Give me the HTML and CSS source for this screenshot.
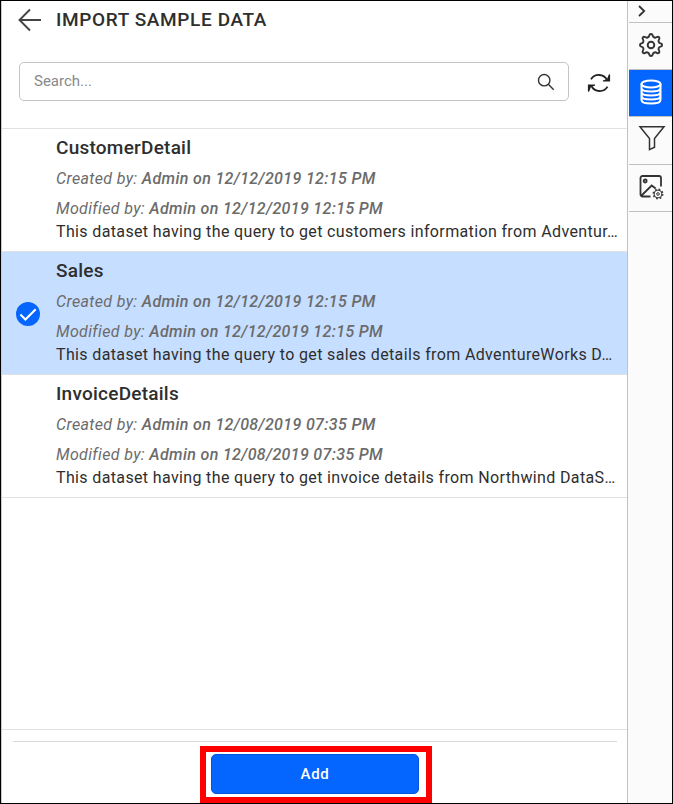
FILE: index.html
```html
<!DOCTYPE html>
<html lang="en">
<head>
<meta charset="utf-8">
<title>Import Sample Data</title>
<link rel="stylesheet" href="styles.css">
</head>
<body>
<div class="app">
  <main class="panel">
    <header class="header">
      <svg class="back" width="24" height="24" viewBox="0 0 24 24"><path d="M12 1.500 1.500 12 12 22.500M1.500 12H23"/></svg>
      <h1>IMPORT SAMPLE DATA</h1>
    </header>
    <div class="tools">
      <div class="search">
        <span>Search...</span>
        <svg width="18" height="18" viewBox="0 0 18 18"><circle cx="7.2" cy="7.2" r="5.7"/><path d="m11.3 11.3 5.4 5.4"/></svg>
      </div>
      <svg class="refresh" width="24" height="22" viewBox="0 0 24 22"><path d="M4 7.400A9 8.700 0 0 1 20 8M20.500 14.600A9 8.700 0 0 1 4.500 14"/><path class="tip" d="M22.500 2.500V9H16L20.500 7.500ZM1.500 19.500V13H8L3.500 14.500Z"/></svg>
    </div>
    <section class="list">
      <article class="item">
        <div class="mark"></div>
        <div class="info">
          <h2>CustomerDetail</h2>
          <p class="meta">Created by: <b>Admin on 12/12/2019 12:15 PM</b></p>
          <p class="meta">Modified by: <b>Admin on 12/12/2019 12:15 PM</b></p>
          <p class="desc">This dataset having the query to get customers information from Adventur…</p>
        </div>
      </article>
      <article class="item selected">
        <div class="mark"><svg width="24" height="24" viewBox="0 0 24 24"><circle cx="12" cy="12" r="12"/><path d="m4.400 12.500 5 5L19.700 7.200"/></svg></div>
        <div class="info">
          <h2>Sales</h2>
          <p class="meta">Created by: <b>Admin on 12/12/2019 12:15 PM</b></p>
          <p class="meta">Modified by: <b>Admin on 12/12/2019 12:15 PM</b></p>
          <p class="desc">This dataset having the query to get sales details from AdventureWorks D…</p>
        </div>
      </article>
      <article class="item">
        <div class="mark"></div>
        <div class="info">
          <h2>InvoiceDetails</h2>
          <p class="meta">Created by: <b>Admin on 12/08/2019 07:35 PM</b></p>
          <p class="meta">Modified by: <b>Admin on 12/08/2019 07:35 PM</b></p>
          <p class="desc">This dataset having the query to get invoice details from Northwind DataS…</p>
        </div>
      </article>
    </section>
    <footer class="footer">
      <div class="highlight"><button class="add">Add</button></div>
    </footer>
  </main>
  <nav class="rail">
    <div class="tab collapse"><svg width="10" height="12" viewBox="0 0 10 12"><path d="m2 1 5.200 5L2 11"/></svg></div>
    <div class="tab"><svg class="gear" width="26" height="26" viewBox="0 0 26 26"><path d="M13 2q1.400 0 1.700 1.500.3 1.500 1.700 2 1.300.5 2.500-.4 1.300-.8 2.100.1.900.8.100 2.100-.9 1.200-.4 2.500.5 1.300 2 1.600 1.400.3 1.400 1.600t-1.400 1.600q-1.500.3-2 1.600-.5 1.300.4 2.500.8 1.300-.1 2.100-.8.900-2.100.100-1.200-.9-2.500-.4-1.400.5-1.700 2Q14.400 24 13 24t-1.700-1.500q-.3-1.500-1.700-2-1.300-.5-2.500.4-1.300.8-2.100-.1-.9-.8-.1-2.100.9-1.200.4-2.500-.5-1.300-2-1.600Q2 14.300 2 13t1.300-1.600q1.500-.3 2-1.600.5-1.300-.4-2.500-.8-1.300.1-2.100.8-.9 2.100-.1 1.200.9 2.500.4 1.400-.5 1.700-2Q11.600 2 13 2z"/><circle cx="13" cy="13" r="3.300"/></svg></div>
    <div class="tab active"><svg width="24" height="26" viewBox="0 0 24 26"><ellipse cx="12" cy="5" rx="9.500" ry="3.500"/><path d="M2.500 5v16c0 4.700 19 4.700 19 0V5M2.500 9c0 4.700 19 4.700 19 0M2.500 13c0 4.700 19 4.700 19 0M2.500 17c0 4.700 19 4.700 19 0"/></svg></div>
    <div class="tab filter"><svg width="28" height="26" viewBox="0 0 28 26"><path d="M2 1.700h24L16.500 13.500v8.800l-5 2.300V13.500z"/></svg></div>
    <div class="tab"><svg class="image" width="26" height="26" viewBox="0 0 26 26"><path d="M12.500 22.500H4.500a2 2 0 0 1-2-2V4a2 2 0 0 1 2-2H21a2 2 0 0 1 2 2v8.500M3 22 13.700 11.500l4 3"/><circle cx="7.200" cy="7" r="1.500"/><g class="small"><circle cx="20" cy="20" r="3.900"/><circle cx="20" cy="20" r="1.300"/><circle class="teeth" cx="20" cy="20" r="4.800"/></g></svg></div>
  </nav>
</div>
</body>
</html>
```

FILE: styles.css
```css
* { box-sizing: border-box; }
body { margin: 0; font-family: Roboto, "Liberation Sans", sans-serif; color: #2e2e2e; }
h1, h2, p { margin: 0; font-weight: 500; }
svg { display: block; fill: none; stroke: #333; stroke-width: 1.5; flex: none; }
.app { display: flex; width: 673px; height: 804px; border: 1px solid #000; background: #fff; overflow: hidden; }
.panel { width: 627px; display: flex; flex-direction: column; border-left: 1px solid #ccc; border-right: 1px solid #c1c1c1; }
.header { display: flex; align-items: center; height: 38px; padding-left: 16px; gap: 14px; }
.back { stroke: #444; stroke-width: 1.9; }
h1 { font-size: 19px; line-height: 36px; letter-spacing: .62px; }
.tools { height: 89px; padding: 23px 0 0 17px; display: flex; align-items: flex-start; }
.search { display: flex; align-items: center; justify-content: space-between; width: 550px; height: 39px; border: 1px solid #c4c4c4; border-radius: 5px; padding: 0 13px 0 14px; font-size: 15px; color: #888; }
.search span { padding-bottom: 2px; }
.search svg { stroke-width: 1.4; }
.refresh { margin: 10px 0 0 18px; stroke: #222; stroke-width: 1.8; }
.tip { fill: #222; stroke-width: 1.2; }
.list { height: 602px; border-top: 1px solid #e1e1e1; border-bottom: 1px solid #e1e1e1; }
.item { display: flex; height: 123px; border-bottom: 1px solid #e1e1e1; }
.selected { background: #c6deff; }
.mark { width: 54px; padding: 50px 0 0 14px; }
.mark circle { fill: #0565ff; stroke: none; }
.mark path { stroke: #fff; stroke-width: 2; }
.info { flex: 1; min-width: 0; padding-top: 5px; white-space: nowrap; }
h2 { font-size: 19px; line-height: 27px; height: 30px; letter-spacing: .24px; }
.meta { height: 30px; line-height: 30px; font-size: 16px; font-weight: 400; font-style: italic; color: #6b6b6b; letter-spacing: .35px; }
.meta b { font-weight: 500; }
.meta + .desc { margin-top: -3px; }
.desc { font-size: 16px; line-height: 21px; font-weight: 400; letter-spacing: .36px; }
.footer { flex: 1; margin: 11px 10px 0 11px; border-top: 1px solid #d8d8d8; padding: 4px 0 0 187px; }
.highlight { width: 232px; height: 57px; border: 6px solid #f00; padding: 2px 5px; }
.add { display: block; width: 208px; height: 40px; border: 1px solid #0556d8; border-radius: 5px; background: #0565ff; color: #fff; font: 500 15px Roboto, sans-serif; letter-spacing: .7px; }
.rail { flex: 1; padding-left: 1px; background: #fbfbfb; }
.tab { height: 47px; border-bottom: 1px solid #c1c1c1; display: flex; align-items: center; justify-content: center; padding-bottom: 3px; }
.collapse { height: 22px; justify-content: flex-start; padding: 0 0 2px 8px; }
.collapse svg { stroke-width: 1.8; }
.gear { stroke-width: 1.9; stroke-linejoin: round; }
.active { background: #0565ff; }
.active svg { stroke: #fff; stroke-width: 2; }
.filter { height: 48px; padding: 0 0 5px 2px; }
.image { stroke-width: 1.8; }
.small { stroke-width: 1; }
.teeth { stroke-dasharray: 1.8 1.97; stroke-width: 1.3; }
```
